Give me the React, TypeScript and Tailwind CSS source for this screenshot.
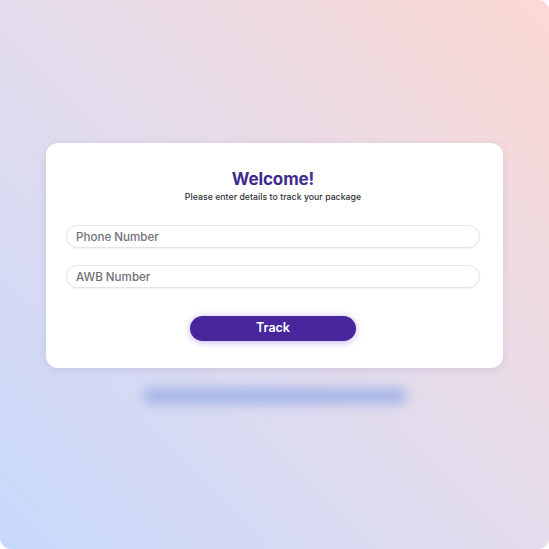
export default function App() {
  return (
    <div className="w-[549px] h-[549px] bg-white" style={{ fontFamily: "Inter, 'Noto Sans', sans-serif" }}>
      <div className="w-full h-full rounded-[11px] rounded-tl-none overflow-hidden bg-linear-to-tr from-[#c7d8fb] via-[#e3dcec] to-[#fcd9d3] pt-[143px] px-[46px]">
        <div className="bg-white rounded-[12px] shadow-[0_2px_8px_rgba(120,110,160,0.18)] pt-[25px] pb-[27px] pl-[20px] pr-[23px] flex flex-col">
          <h1 className="text-center text-[17px] leading-[22px] font-bold text-[#3d2c8d] tracking-[-0.1px]">Welcome!</h1>
          <p className="text-center text-[8.7px] leading-[14px] font-medium text-[#2f2f37] tracking-[0.05px]">
            Please enter details to track your package
          </p>
          <div className="mt-[21px] flex flex-col gap-[17px]">
            <input
              placeholder="Phone Number"
              className="h-[23px] w-full rounded-full border border-[#e3e3e8] bg-white px-[9px] text-[11.6px] font-medium text-[#444] placeholder:text-[#6f6f76] shadow-[0_1px_2px_rgba(0,0,0,0.05)] outline-none"
            />
            <input
              placeholder="AWB Number"
              className="h-[23px] w-full rounded-full border border-[#e3e3e8] bg-white px-[9px] text-[11.6px] font-medium text-[#444] placeholder:text-[#6f6f76] shadow-[0_1px_2px_rgba(0,0,0,0.05)] outline-none"
            />
          </div>
          <div className="mt-[28px] flex justify-center">
            <button className="w-[166px] h-[25px] rounded-full bg-[#47279b] text-white text-[12.5px] font-semibold shadow-[0_1px_7px_rgba(120,70,220,0.45)]">
              Track
            </button>
          </div>
        </div>
        <div className="mx-auto mt-[20px] w-[264px] h-[16px] rounded-full bg-[#a6b5e8] blur-[6px]" />
      </div>
    </div>
  );
}
